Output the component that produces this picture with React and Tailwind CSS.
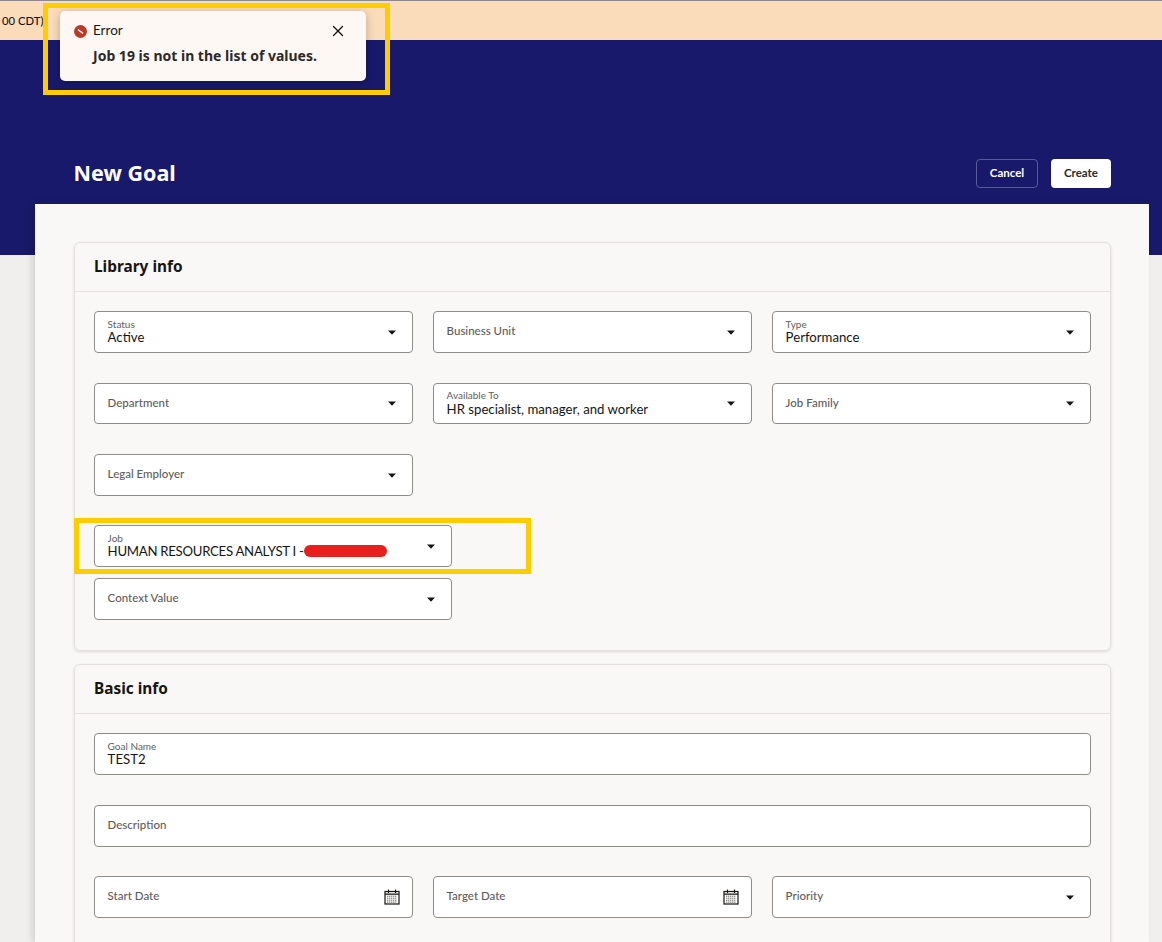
import React from 'react';
import { X } from 'lucide-react';

const Caret = () => (
    <svg width="8" height="5" viewBox="0 0 8 5" className="shrink-0">
        <path d="M0 0.5h8L4 4.8z" fill="#161513" />
    </svg>
);

const CalendarIcon = () => (
    <svg width="16" height="16" viewBox="0 0 16 16" fill="none" className="shrink-0">
        <rect x="1" y="2.5" width="14" height="12.5" stroke="#161513" strokeWidth="1.2" />
        <path d="M4.5 0.5v3.5M11.5 0.5v3.5M1 5.2h14" stroke="#161513" strokeWidth="1.2" />
        <path d="M3 7.2h10M3 9.2h10M3 11.2h10M3 13.1h10" stroke="#6b6966" strokeWidth="1" strokeDasharray="1.4 0.6" />
    </svg>
);

const Field = ({ label, value, caret, calendar, className = 'h-[42px]' }) => (
    <div className={`bg-white border border-[#8f8d8a] rounded-[4px] pl-[12.6px] flex items-center justify-between ${caret ? 'pr-[16px]' : 'pr-[12px]'} ${className}`}>
        {value ? (
            <div className="min-w-0 pb-[1px]">
                <div className="text-[10px] leading-[11px] text-[#5f5d5a]">{label}</div>
                <div className="text-[13.2px] leading-[15px] text-[#161513] flex items-center">{value}</div>
            </div>
        ) : (
            <div className="text-[11.5px] font-medium text-[#5f5d5a] pb-[2px]">{label}</div>
        )}
        {caret && <Caret />}
        {calendar && <CalendarIcon />}
    </div>
);

const Panel = ({ title, className = '', children }) => (
    <section className={`border border-[#e4e1dd] rounded-[6px] shadow-[0_1px_3px_rgba(0,0,0,0.12)] ${className}`}>
        <h2 className="h-[49px] px-[19px] flex items-center border-b border-[#e4e1dd] text-[15.4px] font-bold text-[#161513] [font-family:'Noto_Sans',sans-serif]">{title}</h2>
        <div className="px-[19px] pt-[19px]">{children}</div>
    </section>
);

export default function App() {
    return (
        <div className="relative w-[1162px] h-[942px] overflow-hidden bg-[#f1efed] [font-family:Lato,'Noto_Sans',sans-serif]">
            {/* Banner */}
            <div className="h-[40px] bg-[#fadcbb] border-t border-[#8a8a8a] flex items-center pl-[2px] pt-[1px] text-[11.3px] font-medium text-[#161513]">
                00 CDT)
            </div>

            {/* Page header */}
            <div className="h-[215px] bg-[#19196b] pl-[73.5px] pr-[51px] pt-[119px] flex items-start justify-between">
                <h1 className="text-[21.5px] leading-[28px] font-bold text-white [font-family:'Noto_Sans',sans-serif]">New Goal</h1>
                <div className="flex gap-[13px]">
                    <button className="w-[62px] h-[29px] pb-[1px] rounded-[4px] border border-[#5a5a9a] text-[11.5px] font-bold text-white">Cancel</button>
                    <button className="w-[60px] h-[29px] pb-[1px] rounded-[4px] bg-white text-[11.5px] font-bold text-[#2b2a28]">Create</button>
                </div>
            </div>

            {/* Content */}
            <main className="relative -mt-[51px] mx-[35px] w-[1114px] h-[738px] bg-[#f9f8f6] shadow-[-3px_0_6px_rgba(0,0,0,0.12)] pl-[39px] pr-[38px] pt-[38px]">
                <Panel title="Library info" className="h-[409px]">
                    <div className="grid grid-cols-3 gap-x-[20px]">
                        <Field label="Status" value="Active" caret />
                        <Field label="Business Unit" caret />
                        <Field label="Type" value="Performance" caret />
                    </div>
                    <div className="grid grid-cols-3 gap-x-[20px] mt-[30px]">
                        <Field label="Department" caret className="h-[41px]" />
                        <Field label="Available To" value={<span className="pt-[1px]">HR specialist, manager, and worker</span>} caret className="h-[41px]" />
                        <Field label="Job Family" caret className="h-[41px]" />
                    </div>
                    <div className="grid grid-cols-3 gap-x-[20px] mt-[30px]">
                        <Field label="Legal Employer" caret />
                    </div>
                    <Field
                        label="Job"
                        value={
                            <>
                                <span className="tracking-[-0.28px]">HUMAN RESOURCES ANALYST I -</span>
                                <span className="inline-block w-[83px] h-[12px] rounded-full bg-[#e81f1f]" />
                            </>
                        }
                        caret
                        className="h-[42px] w-[358px] mt-[29px]"
                    />
                    <Field label="Context Value" caret className="h-[42px] w-[358px] mt-[11px]" />
                </Panel>

                <Panel title="Basic info" className="mt-[13px] h-[400px]">
                    <Field label="Goal Name" value="TEST2" />
                    <Field label="Description" className="h-[42px] mt-[30px]" />
                    <div className="grid grid-cols-3 gap-x-[20px] mt-[29px]">
                        <Field label="Start Date" calendar />
                        <Field label="Target Date" calendar />
                        <Field label="Priority" caret />
                    </div>
                </Panel>
            </main>

            {/* Error toast */}
            <div className="absolute left-[60px] top-[11px] w-[306px] h-[70px] bg-[#fef8f5] rounded-[5px] shadow-[0_2px_8px_rgba(0,0,0,0.25)] pl-[14px] pr-[19px] pt-[12px]">
                <div className="flex items-center justify-between h-[16px]">
                    <div className="flex items-center gap-[6px]">
                        <svg width="13" height="13" viewBox="0 0 13 13">
                            <circle cx="6.5" cy="6.5" r="6.5" fill="#b93a26" />
                            <path d="M4 4.5l5 4" stroke="#fff" strokeWidth="1.6" />
                        </svg>
                        <span className="text-[13.5px] leading-[15px] pb-[1px] text-[#161513]">Error</span>
                    </div>
                    <X size={18} strokeWidth={1.8} color="#161513" />
                </div>
                <p className="mt-[8px] pl-[19px] text-[14px] leading-[18px] font-bold text-[#2b2a28] [font-family:'Noto_Sans',sans-serif]">Job 19 is not in the list of values.</p>
            </div>

            {/* Highlight boxes */}
            <div className="absolute left-[43px] top-[3px] w-[347px] h-[92px] border-[5px] border-[#fdcd00] pointer-events-none" />
            <div className="absolute left-[74px] top-[518px] w-[457px] h-[56px] border-[5px] border-[#fdcd00] pointer-events-none" />
        </div>
    );
}
